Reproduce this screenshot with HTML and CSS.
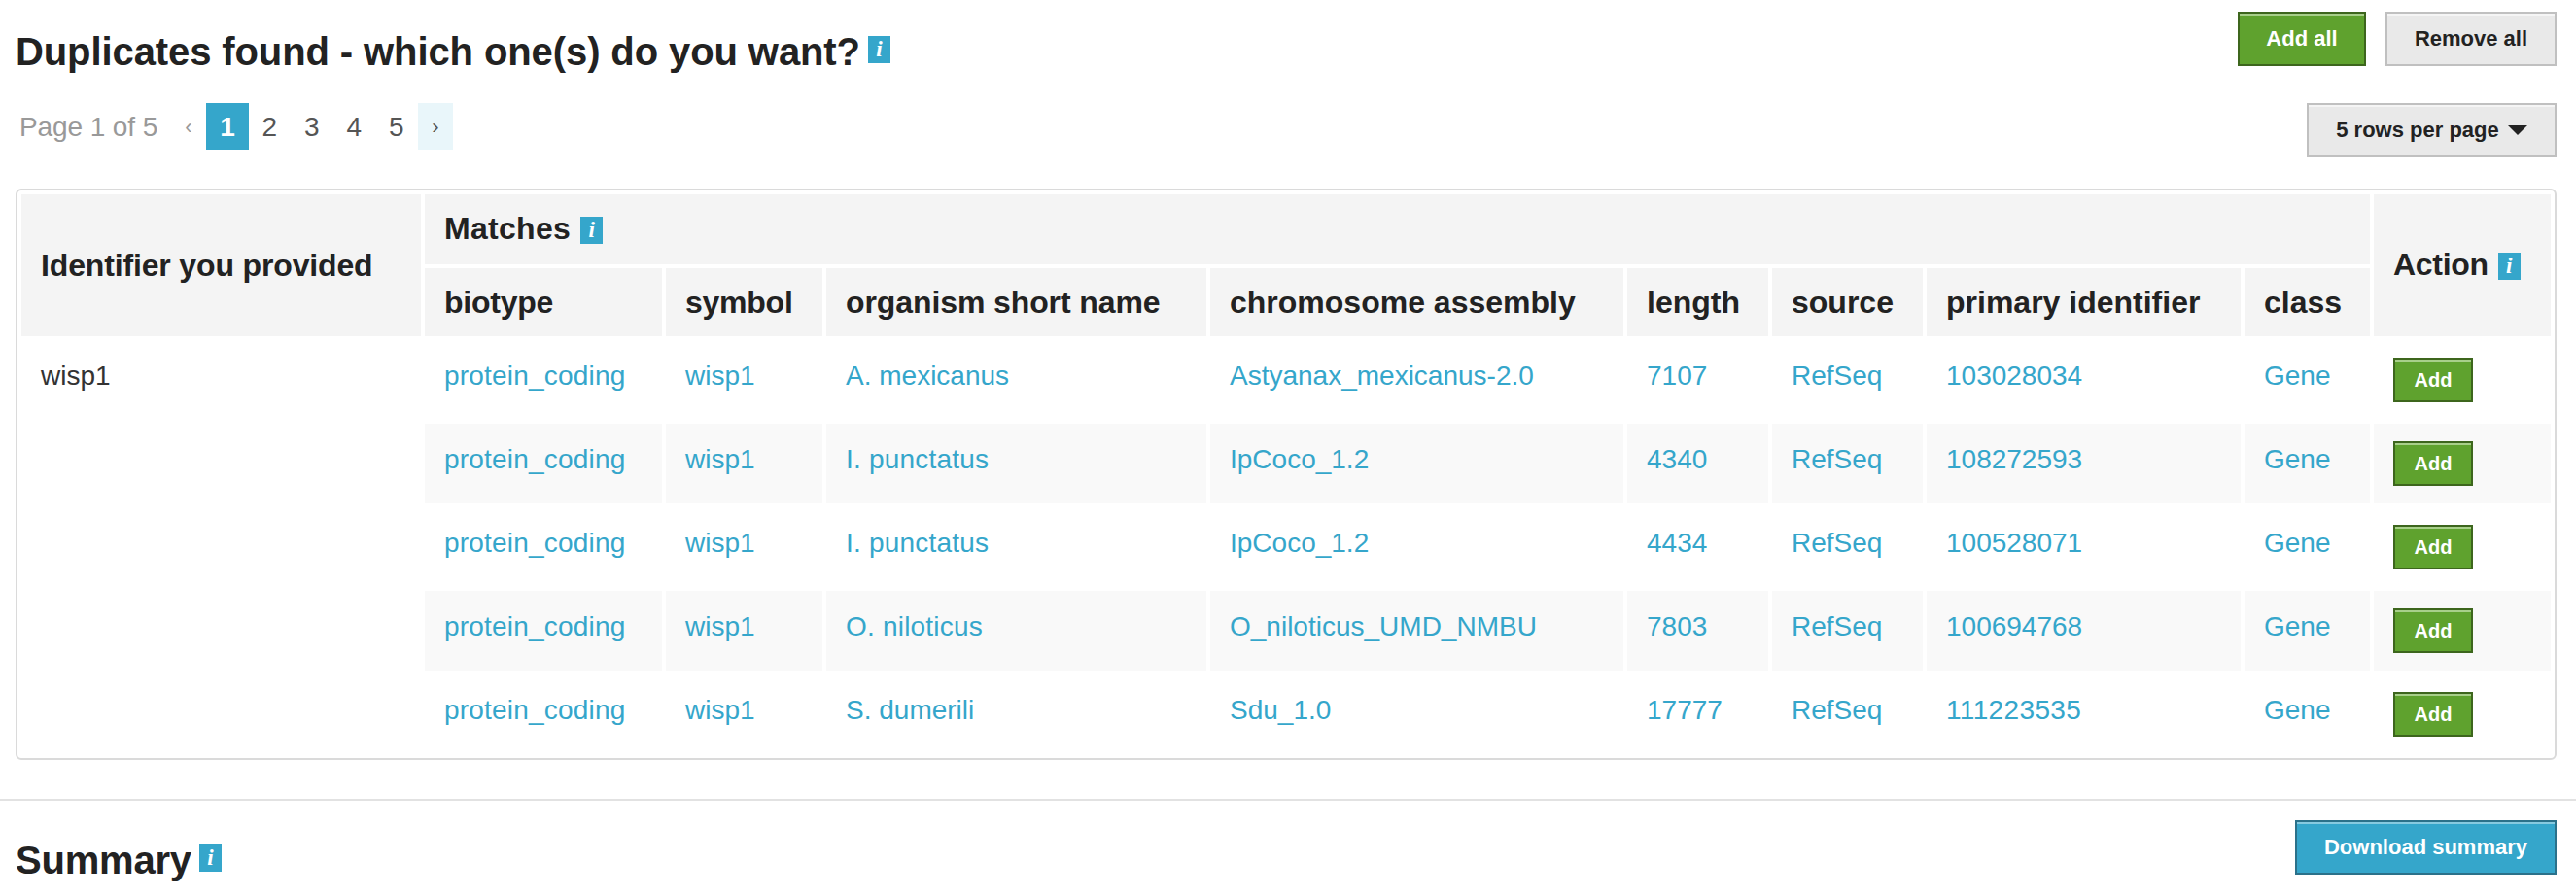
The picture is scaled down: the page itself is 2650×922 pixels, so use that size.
FILE: index.html
```html
<!DOCTYPE html>
<html lang="en">
<head>
<meta charset="utf-8">
<title>Duplicates</title>
<link rel="stylesheet" href="styles.css">
</head>
<body>
<section class="duplicates">
  <div class="heading-row">
    <h2 class="title"><span class="t-dup">Duplicates found - which one(s) do you want?</span><span class="info">i</span></h2>
    <div class="actions">
      <button class="btn btn-green add-all">Add all</button>
      <button class="btn btn-grey remove-all">Remove all</button>
    </div>
  </div>
  <div class="pager-row">
    <nav class="pager">
      <span class="page-of">Page 1 of 5</span>
      <span class="pg prev">‹</span>
      <span class="pg current">1</span>
      <span class="pg">2</span>
      <span class="pg">3</span>
      <span class="pg">4</span>
      <span class="pg">5</span>
      <span class="pg next">›</span>
    </nav>
    <button class="btn btn-grey rows">5 rows per page<svg class="caret" width="20" height="10" viewBox="0 0 20 10"><path d="M0 0h20L10 10z" fill="#222"/></svg></button>
  </div>
  <table class="matches">
    <colgroup><col class="c1"><col class="c2"><col class="c3"><col class="c4"><col class="c5"><col class="c6"><col class="c7"><col class="c8"><col class="c9"><col class="c10"></colgroup>
    <thead>
      <tr class="h1"><th rowspan="2" class="th-ident">Identifier you provided</th><th colspan="8" class="th-matches"><span>Matches</span><span class="info">i</span></th><th rowspan="2" class="th-action"><span>Action</span><span class="info">i</span></th></tr>
      <tr class="h2"><th class="tight">biotype</th><th class="tight">symbol</th><th class="th-org">organism short name</th><th>chromosome assembly</th><th>length</th><th>source</th><th>primary identifier</th><th>class</th></tr>
    </thead>
    <tbody>
      <tr><td rowspan="5" class="ident">wisp1</td><td class="bio">protein_coding</td><td>wisp1</td><td>A. mexicanus</td><td>Astyanax_mexicanus-2.0</td><td>7107</td><td>RefSeq</td><td>103028034</td><td>Gene</td><td class="act"><button class="btn btn-green small">Add</button></td></tr>
      <tr class="alt"><td class="bio">protein_coding</td><td>wisp1</td><td class="org">I. punctatus</td><td>IpCoco_1.2</td><td>4340</td><td>RefSeq</td><td>108272593</td><td>Gene</td><td class="act"><button class="btn btn-green small">Add</button></td></tr>
      <tr><td class="bio">protein_coding</td><td>wisp1</td><td class="org">I. punctatus</td><td>IpCoco_1.2</td><td>4434</td><td>RefSeq</td><td>100528071</td><td>Gene</td><td class="act"><button class="btn btn-green small">Add</button></td></tr>
      <tr class="alt"><td class="bio">protein_coding</td><td>wisp1</td><td class="org">O. niloticus</td><td>O_niloticus_UMD_NMBU</td><td>7803</td><td>RefSeq</td><td>100694768</td><td>Gene</td><td class="act"><button class="btn btn-green small">Add</button></td></tr>
      <tr><td class="bio">protein_coding</td><td>wisp1</td><td>S. dumerili</td><td>Sdu_1.0</td><td>17777</td><td>RefSeq</td><td class="num">111223535</td><td>Gene</td><td class="act"><button class="btn btn-green small">Add</button></td></tr>
    </tbody>
  </table>
</section>
<section class="summary">
  <h2 class="title"><span class="t-sum">Summary</span><span class="info">i</span></h2>
  <button class="btn btn-blue download">Download summary</button>
</section>
</body>
</html>
```

FILE: styles.css
```css
* { box-sizing: border-box; }
body { margin: 0; background: #fff; color: #222; font-family: "Liberation Sans", Arial, sans-serif; font-size: 28px; }
.duplicates { height: 822px; padding: 12px 20px 0 16px; }
.heading-row { display: flex; justify-content: space-between; align-items: flex-start; height: 94px; }
.title { margin: 21px 0 0; display: flex; align-items: flex-start; font-size: 40px; line-height: 40px; font-weight: bold; white-space: nowrap; }
.t-dup { letter-spacing: -0.1px; }
.t-sum { letter-spacing: -0.2px; }
.info { display: inline-block; flex: none; width: 23px; height: 28px; margin-left: 8px; background: #35a6cb; color: #fff; font: italic bold 23px/28px "Liberation Serif", serif; text-align: center; letter-spacing: 0; }
.title .info { margin-top: 4px; }
.actions { display: flex; gap: 20px; }
.btn { display: block; height: 56px; padding: 0; border: 2px solid; font: bold 22px/52px "Liberation Sans", Arial, sans-serif; text-align: center; white-space: nowrap; }
.btn-green { background: #5fa22e; border-color: #3d661d; color: #fff; box-shadow: inset 0 2px 0 #a8cf8a; }
.btn-grey { background: #e9e9e9; border-color: #c0c0c0; color: #222; box-shadow: inset 0 2px 0 #f5f5f5; }
.btn-blue { background: #35a6cb; border-color: #2b718a; color: #fff; box-shadow: inset 0 2px 0 #86cae0; }
.add-all { width: 132px; }
.remove-all { width: 176px; }
.pager-row { display: flex; justify-content: space-between; align-items: flex-start; height: 88px; }
.pager { display: flex; padding-left: 4px; line-height: 50px; color: #555; }
.page-of { width: 160px; color: #999; letter-spacing: -0.1px; }
.pg { width: 43.5px; height: 48px; text-align: center; padding-right: 1px; }
.prev { width: 32px; font-size: 22px; color: #999; padding: 0 4px 0 0; }
.current { width: 44px; background: #35a6cb; color: #fff; font-weight: bold; padding: 0; }
.next { width: 36px; font-size: 22px; background: #e9f6fa; padding: 0; }
.rows { width: 257px; display: flex; justify-content: center; align-items: center; }
.caret { margin-left: 9px; }
.matches { width: 2614px; height: 588px; table-layout: fixed; border: 2px solid #dadada; border-radius: 6px; border-collapse: separate; border-spacing: 4px; }
.c1 { width: 411px; }
.c2 { width: 244px; }
.c3 { width: 161px; }
.c4 { width: 391px; }
.c5 { width: 425px; }
.c6 { width: 145px; }
.c7 { width: 155px; }
.c8 { width: 323px; }
.c9 { width: 129px; }
.c10 { width: 182px; }
th { padding: 0 0 0 20px; background: #f4f4f4; text-align: left; vertical-align: middle; font-size: 32px; line-height: 36px; white-space: nowrap; }
th .info { vertical-align: 2px; margin: -10px 0 -10px 10px; }
.th-ident { letter-spacing: -0.15px; }
.th-matches { padding-bottom: 2px; letter-spacing: 0.3px; }
.th-action { padding-bottom: 2px; letter-spacing: -0.3px; }
.tight { letter-spacing: -0.25px; }
.th-org { letter-spacing: -0.1px; }
.h1 { height: 72px; }
.h2 { height: 70px; }
td { height: 82px; padding: 19px 0 0 20px; vertical-align: top; line-height: 36px; color: #35a6cb; white-space: nowrap; }
.act { padding-top: 18px; }
.alt td { background: #f9f9f9; }
.ident { color: #333; }
.bio, .org { letter-spacing: 0.2px; }
.num { letter-spacing: 0.35px; }
.small { width: 82px; height: 46px; font-size: 20px; line-height: 42px; }
.summary { display: flex; justify-content: space-between; height: 100px; padding: 20px 20px 0 16px; border-top: 2px solid #e2e2e2; }
.download { width: 269px; }
```
